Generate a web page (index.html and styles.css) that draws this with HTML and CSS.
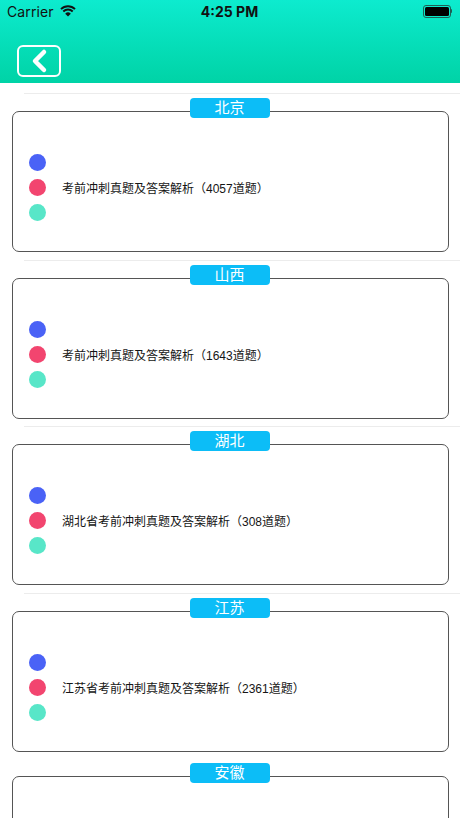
FILE: index.html
```html
<!DOCTYPE html>
<html lang="zh">
<head>
<meta charset="utf-8">
<title>真题</title>
<link rel="stylesheet" href="styles.css">
</head>
<body>
<header class="header">
  <div class="status">
    <div class="status-left">
      <span class="carrier">Carrier</span>
      <svg class="wifi" width="16" height="12" viewBox="0 0 16 12">
        <path d="M8 11.6 L5.2 8.7 A4 4 0 0 1 10.8 8.7 Z" fill="#111"/>
        <path d="M3.3 6.5 A6.7 6.7 0 0 1 12.7 6.5" fill="none" stroke="#111" stroke-width="1.9"/>
        <path d="M1 4.1 A10 10 0 0 1 15 4.1" fill="none" stroke="#111" stroke-width="1.9"/>
      </svg>
    </div>
    <div class="time">4:25 PM</div>
    <div class="status-right">
      <div class="battery"><div class="battery-fill"></div></div>
      <div class="battery-tip"></div>
    </div>
  </div>
  <div class="navbar">
    <button class="back" type="button" aria-label="返回">
      <svg width="40" height="28" viewBox="0 0 40 28">
        <path d="M25 5 L16 14 L25 23" fill="none" stroke="#fff" stroke-width="4.5" stroke-linecap="round" stroke-linejoin="round"/>
      </svg>
    </button>
  </div>
</header>

<main class="list">
  <section class="section">
    <div class="sep"></div>
    <div class="card">
      <div class="badge">北京</div>
      <div class="row"><span class="dot dot-blue"></span></div>
      <div class="row"><span class="dot dot-red"></span><span class="label">考前冲刺真题及答案解析（4057道题）</span></div>
      <div class="row"><span class="dot dot-teal"></span></div>
    </div>
  </section>
  <section class="section">
    <div class="sep"></div>
    <div class="card">
      <div class="badge">山西</div>
      <div class="row"><span class="dot dot-blue"></span></div>
      <div class="row"><span class="dot dot-red"></span><span class="label">考前冲刺真题及答案解析（1643道题）</span></div>
      <div class="row"><span class="dot dot-teal"></span></div>
    </div>
  </section>
  <section class="section">
    <div class="sep"></div>
    <div class="card">
      <div class="badge">湖北</div>
      <div class="row"><span class="dot dot-blue"></span></div>
      <div class="row"><span class="dot dot-red"></span><span class="label">湖北省考前冲刺真题及答案解析（308道题）</span></div>
      <div class="row"><span class="dot dot-teal"></span></div>
    </div>
  </section>
  <section class="section">
    <div class="sep"></div>
    <div class="card">
      <div class="badge">江苏</div>
      <div class="row"><span class="dot dot-blue"></span></div>
      <div class="row"><span class="dot dot-red"></span><span class="label">江苏省考前冲刺真题及答案解析（2361道题）</span></div>
      <div class="row"><span class="dot dot-teal"></span></div>
    </div>
  </section>
  <section class="section section-last">
    <div class="sep"></div>
    <div class="card">
      <div class="badge">安徽</div>
    </div>
  </section>
</main>
</body>
</html>
```
FILE: styles.css
```css
html, body {
  margin: 0;
  padding: 0;
}
body {
  width: 460px;
  height: 818px;
  overflow: hidden;
  background: #fff;
  font-family: "Liberation Sans", "Noto Sans CJK SC", sans-serif;
  color: #111;
}
.header {
  height: 83px;
  background: linear-gradient(180deg, #0debcf 0%, #06dfba 50%, #00d3a6 100%);
  display: flex;
  flex-direction: column;
}
.status {
  height: 22px;
  display: flex;
  align-items: center;
  justify-content: space-between;
  padding: 0 6px 0 7px;
}
.status-left {
  display: flex;
  align-items: center;
  gap: 6px;
  width: 120px;
}
.carrier {
  font-family: "Inter", "Liberation Sans", sans-serif;
  font-size: 14px;
  color: #111;
  letter-spacing: 0.1px;
}
.wifi {
  display: block;
  margin-top: -1px;
}
.time {
  font-family: "Inter", "Liberation Sans", sans-serif;
  font-size: 14px;
  font-weight: 700;
  color: #111;
  text-align: center;
  flex: 1;
}
.status-right {
  width: 120px;
  display: flex;
  justify-content: flex-end;
  align-items: center;
  padding-right: 2px;
}
.battery {
  width: 24px;
  height: 9px;
  border: 1px solid #1f5f55;
  border-radius: 3px;
  padding: 1px;
  box-sizing: content-box;
}
.battery-fill {
  width: 100%;
  height: 100%;
  background: #000;
  border-radius: 1.5px;
}
.battery-tip {
  width: 1.5px;
  height: 4px;
  background: #1f5f55;
  border-radius: 0 1px 1px 0;
}
.navbar {
  flex: 1;
  display: flex;
  align-items: flex-start;
  padding: 23px 0 0 17px;
}
.back {
  width: 44px;
  height: 32px;
  border: 2px solid #fff;
  border-radius: 6px;
  background: transparent;
  padding: 0;
  margin: 0;
  display: flex;
  align-items: center;
  justify-content: center;
  box-sizing: border-box;
}
.back svg {
  display: block;
}
.list {
  padding-top: 10px;
}
.section {
  height: 166.5px;
  display: flex;
  flex-direction: column;
}
.section-last {
  height: 60px;
}
.sep {
  height: 1px;
  margin-left: 24px;
  background: #ececec;
}
.card {
  position: relative;
  margin: 17px 11px 0 12px;
  height: 141px;
  flex: none;
  box-sizing: border-box;
  border: 1.3px solid #555;
  border-radius: 7px;
  padding: 38px 0 0 15.5px;
  display: flex;
  flex-direction: column;
}
.badge {
  position: absolute;
  top: -14px;
  left: 50%;
  margin-left: -41px;
  width: 80px;
  height: 20px;
  border-radius: 4px;
  background: #0cbdf7;
  color: #fff;
  font-size: 15px;
  line-height: 20px;
  text-align: center;
}
.row {
  height: 25px;
  display: flex;
  align-items: center;
}
.dot {
  width: 17px;
  height: 17px;
  border-radius: 50%;
  flex: none;
}
.dot-blue { background: #4a62f6; }
.dot-red { background: #f2456f; }
.dot-teal { background: #58e6c8; }
.label {
  margin-left: 16.5px;
  font-size: 12px;
  color: #151515;
  white-space: nowrap;
}
```
